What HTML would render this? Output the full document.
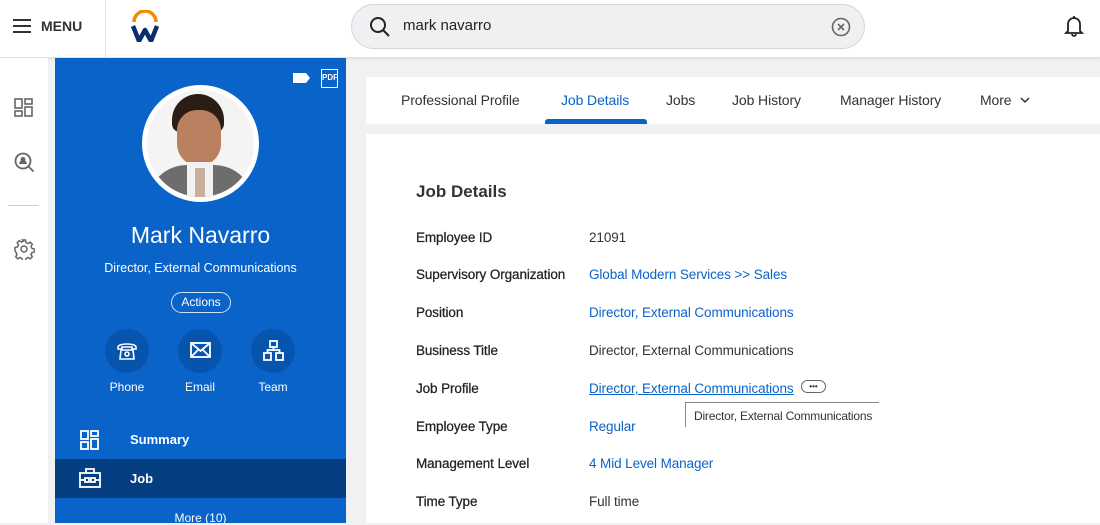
<!DOCTYPE html>
<html><head><style>
*{margin:0;padding:0;box-sizing:border-box}
body{width:1100px;height:523px;overflow:hidden;background:#f0f1f2;font-family:"Liberation Sans",sans-serif;position:relative;color:#333}
.a{position:absolute}
#hdr{left:0;top:0;width:1100px;height:58px;background:#fff;border-bottom:1px solid #dfe1e3;box-shadow:0 1px 3px rgba(0,0,0,.08)}
#rail{left:0;top:58px;width:48px;height:465px;background:#fff}
#blue{left:55px;top:58px;width:291px;height:465px;background:#0a63c9}
.lbl{font-size:13.5px;color:#222;position:absolute;left:416px;letter-spacing:-0.1px;-webkit-text-stroke:0.25px #222}
.val{font-size:13.5px;color:#333;position:absolute;left:589px;letter-spacing:-0.1px}
.lnk{color:#0a63c9}
.circ{position:absolute;width:44px;height:44px;border-radius:50%;background:#0754ad;top:329px}
.cl{position:absolute;top:380px;font-size:12px;color:#fff;width:60px;text-align:center}
.tab{position:absolute;top:92px;font-size:14px;color:#333;letter-spacing:-0.1px}
</style></head><body>
<div id="hdr" class="a"></div>
<svg class="a" style="left:12px;top:18px" width="20" height="16"><path d="M1 2h18M1 8h18M1 14h18" stroke="#333" stroke-width="2"/></svg>
<div class="a" style="left:41px;top:18px;font-size:14px;font-weight:bold;color:#333">MENU</div>
<div class="a" style="left:105px;top:0;width:1px;height:58px;background:#dfe1e3"></div>
<svg class="a" style="left:130px;top:10px" width="30" height="32"><path d="M4 12 A11 11 0 0 1 26 12" stroke="#f38b00" stroke-width="3.5" fill="none"/><path d="M3 16 L9 31 L15 20 L21 31 L27 16" stroke="#0b2f6d" stroke-width="4.5" fill="none" stroke-linejoin="round"/></svg>
<div class="a" style="left:351px;top:4px;width:514px;height:45px;border-radius:23px;background:#eef0f2;border:1px solid #d5d8db"></div>
<svg class="a" style="left:369px;top:16px" width="22" height="22"><circle cx="9" cy="9" r="7" stroke="#222" stroke-width="2" fill="none"/><path d="M14 14l6 6" stroke="#222" stroke-width="2"/></svg>
<div class="a" style="left:403px;top:17px;font-size:15px;color:#222">mark navarro</div>
<svg class="a" style="left:830px;top:16px" width="22" height="22"><circle cx="11" cy="11" r="8.5" stroke="#666" stroke-width="1.6" fill="none"/><path d="M8 8l6 6M14 8l-6 6" stroke="#666" stroke-width="1.6"/></svg>
<svg class="a" style="left:1064px;top:15px" width="20" height="22"><path d="M4 16V9a6 6 0 0 1 12 0v7l2 2H2z M8 19a2 2 0 0 0 4 0 M10 1v2" stroke="#222" stroke-width="1.8" fill="none"/></svg>

<div id="rail" class="a"></div>
<svg class="a" style="left:14px;top:98px" width="20" height="20" fill="none" stroke="#666" stroke-width="1.6"><rect x="1" y="1" width="7" height="9"/><rect x="11" y="1" width="7" height="5"/><rect x="1" y="13" width="7" height="5"/><rect x="11" y="9" width="7" height="9"/></svg>
<svg class="a" style="left:14px;top:152px" width="22" height="22" fill="none" stroke="#666" stroke-width="1.8"><circle cx="9" cy="9" r="7.5"/><path d="M14.5 14.5l5 5"/><circle cx="9" cy="7.5" r="1.6" fill="#666"/><path d="M6 12a3 3 0 0 1 6 0" fill="#666"/></svg>
<div class="a" style="left:8px;top:205px;width:31px;height:1px;background:#ccc"></div>
<svg class="a" style="left:13px;top:238px" width="22" height="22" fill="none" stroke="#666" stroke-width="1.5"><circle cx="11" cy="11" r="3"/><path d="M9.5 2h3l.5 2.5 2 1 2.3-1.3 2 2-1.3 2.3 1 2 2.5.5v3l-2.5.5-1 2 1.3 2.3-2 2-2.3-1.3-2 1-.5 2.5h-3l-.5-2.5-2-1-2.3 1.3-2-2 1.3-2.3-1-2L2 12.5v-3l2.5-.5 1-2-1.3-2.3 2-2 2.3 1.3 2-1z"/></svg>

<div id="blue" class="a"></div>
<svg class="a" style="left:293px;top:72px" width="18" height="12"><path d="M0 1h13l4 5-4 5H0z" fill="#fff"/></svg>
<div class="a" style="left:321px;top:69px;width:17px;height:19px;border:1.5px solid #fff;font-size:8px;font-weight:bold;color:#fff;text-align:center;line-height:16px">PDF</div>
<div class="a" style="left:142px;top:85px;width:117px;height:117px;border-radius:50%;background:#fff"></div>
<div class="a" style="left:147px;top:90px;width:107px;height:107px;border-radius:50%;overflow:hidden;background:#f4f4f4">
<div class="a" style="left:25px;top:4px;width:52px;height:38px;border-radius:26px 26px 8px 8px;background:#2a1d16"></div>
<div class="a" style="left:30px;top:20px;width:44px;height:56px;border-radius:22px 22px 24px 24px;background:#b98060"></div>
<div class="a" style="left:0px;top:75px;width:107px;height:50px;border-radius:40px 40px 0 0;background:#6d6d6d"></div>
<div class="a" style="left:40px;top:72px;width:26px;height:40px;background:#f2f2f2"></div>
<div class="a" style="left:48px;top:78px;width:10px;height:30px;background:#c9aea0"></div>
</div>
<div class="a" style="left:55px;top:222px;width:291px;text-align:center;font-size:23px;color:#fff">Mark Navarro</div>
<div class="a" style="left:55px;top:261px;width:291px;text-align:center;font-size:12.5px;color:#fff">Director, External Communications</div>
<div class="a" style="left:171px;top:292px;width:60px;height:21px;border:1px solid #cfe0f5;border-radius:11px;font-size:12px;color:#fff;text-align:center;line-height:19px">Actions</div>
<div class="circ" style="left:105px"></div><div class="circ" style="left:178px"></div><div class="circ" style="left:251px"></div>
<svg class="a" style="left:117px;top:341px" width="20" height="20" fill="none" stroke="#fff" stroke-width="1.6"><path d="M1 6c0-4 18-4 18 0v2h-4V6H5v2H1z"/><path d="M4 9h12l1 9H3z"/><circle cx="10" cy="13" r="2"/></svg>
<svg class="a" style="left:190px;top:342px" width="21" height="16" fill="none" stroke="#fff" stroke-width="1.8"><rect x="1" y="1" width="19" height="14"/><path d="M1 1l9.5 8L20 1M1 15l7-7M20 15l-7-7"/></svg>
<svg class="a" style="left:263px;top:340px" width="21" height="21" fill="none" stroke="#fff" stroke-width="1.8"><rect x="7" y="1" width="7" height="6"/><rect x="1" y="13" width="7" height="7"/><rect x="13" y="13" width="7" height="7"/><path d="M10.5 7v3M4.5 13v-3h12v3"/></svg>
<div class="cl" style="left:97px">Phone</div><div class="cl" style="left:170px">Email</div><div class="cl" style="left:243px">Team</div>
<svg class="a" style="left:80px;top:430px" width="20" height="20" fill="none" stroke="#fff" stroke-width="1.8"><rect x="1" y="1" width="7" height="8"/><rect x="11" y="1" width="7" height="5"/><rect x="1" y="12" width="7" height="7"/><rect x="11" y="9" width="7" height="10"/></svg>
<div class="a" style="left:130px;top:432px;font-size:13px;font-weight:bold;color:#fff">Summary</div>
<div class="a" style="left:55px;top:459px;width:291px;height:39px;background:#063f81"></div>
<svg class="a" style="left:79px;top:468px" width="22" height="20" fill="none" stroke="#fff" stroke-width="1.8"><rect x="1" y="5" width="20" height="14"/><path d="M7 5V1h8v4M1 12h5M16 12h5"/><rect x="6" y="10" width="4" height="4"/><rect x="12" y="10" width="4" height="4"/></svg>
<div class="a" style="left:130px;top:471px;font-size:13px;font-weight:bold;color:#fff">Job</div>
<div class="a" style="left:55px;top:511px;width:291px;text-align:center;font-size:12px;color:#fff">More (10)</div>

<div class="a" style="left:366px;top:77px;width:734px;height:47px;background:#fff"></div>
<div class="tab" style="left:401px">Professional Profile</div>
<div class="tab" style="left:561px;color:#0a63c9">Job Details</div>
<div class="a" style="left:545px;top:119px;width:102px;height:5px;border-radius:3px 3px 0 0;background:#0a63c9"></div>
<div class="tab" style="left:666px">Jobs</div>
<div class="tab" style="left:732px">Job History</div>
<div class="tab" style="left:840px">Manager History</div>
<div class="tab" style="left:980px">More</div>
<svg class="a" style="left:1020px;top:97px" width="10" height="7"><path d="M1 1l4 4 4-4" stroke="#333" stroke-width="1.5" fill="none"/></svg>
<div class="a" style="left:366px;top:134px;width:734px;height:389px;background:#fff"></div>
<div class="a" style="left:416px;top:182px;font-size:17px;font-weight:bold;color:#333">Job Details</div>
<div class="lbl" style="top:230px">Employee ID</div><div class="val" style="top:230px">21091</div>
<div class="lbl" style="top:267px">Supervisory Organization</div><div class="val lnk" style="top:267px">Global Modern Services &gt;&gt; Sales</div>
<div class="lbl" style="top:305px">Position</div><div class="val lnk" style="top:305px">Director, External Communications</div>
<div class="lbl" style="top:343px">Business Title</div><div class="val" style="top:343px">Director, External Communications</div>
<div class="lbl" style="top:381px">Job Profile</div><div class="val lnk" style="top:381px;text-decoration:underline">Director, External Communications</div>
<div class="a" style="left:801px;top:380px;width:25px;height:13px;border:1px solid #666;border-radius:7px;font-size:8px;line-height:11px;text-align:center;color:#333;font-weight:bold;background:#fff">•••</div>
<div class="a" style="left:685px;top:402px;width:194px;height:25px;border-left:1px solid #888;border-top:1px solid #888;background:#fff;font-size:12px;color:#333;padding:6px 0 0 8px;letter-spacing:-0.2px">Director, External Communications</div>
<div class="lbl" style="top:419px">Employee Type</div><div class="val lnk" style="top:419px">Regular</div>
<div class="lbl" style="top:456px">Management Level</div><div class="val lnk" style="top:456px">4 Mid Level Manager</div>
<div class="lbl" style="top:494px">Time Type</div><div class="val" style="top:494px">Full time</div>
</body></html>
